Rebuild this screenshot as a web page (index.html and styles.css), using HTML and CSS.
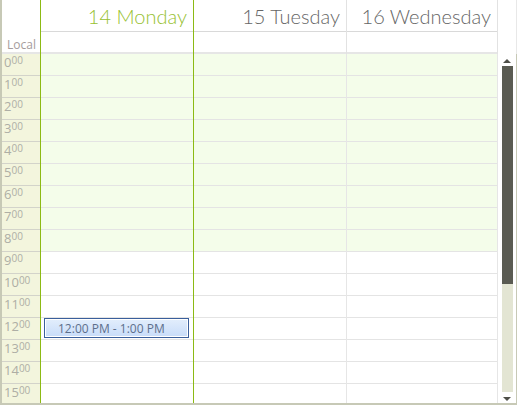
FILE: index.html
```html
<!DOCTYPE html>
<html lang="en">
<head>
    <meta charset="UTF-8">
    <title>Scheduler - Week</title>
    <link rel="stylesheet" href="styles.css">
</head>
<body>

<div class="scheduler">
    <div class="header">
        <div class="gutter-head">
            <div class="head-blank"></div>
            <div class="tz-label">Local</div>
        </div>
        <div class="day-head today">
            <div class="day-name">14 Monday</div>
            <div class="all-day"></div>
        </div>
        <div class="day-head">
            <div class="day-name">15 Tuesday</div>
            <div class="all-day"></div>
        </div>
        <div class="day-head last">
            <div class="day-name">16 Wednesday</div>
            <div class="all-day"></div>
        </div>
        <div class="head-corner"></div>
    </div>

    <div class="body">
        <div class="gutter">
            <div class="hour">0<sup>00</sup></div>
            <div class="hour">1<sup>00</sup></div>
            <div class="hour">2<sup>00</sup></div>
            <div class="hour">3<sup>00</sup></div>
            <div class="hour">4<sup>00</sup></div>
            <div class="hour">5<sup>00</sup></div>
            <div class="hour">6<sup>00</sup></div>
            <div class="hour">7<sup>00</sup></div>
            <div class="hour">8<sup>00</sup></div>
            <div class="hour">9<sup>00</sup></div>
            <div class="hour">10<sup>00</sup></div>
            <div class="hour">11<sup>00</sup></div>
            <div class="hour">12<sup>00</sup></div>
            <div class="hour">13<sup>00</sup></div>
            <div class="hour">14<sup>00</sup></div>
            <div class="hour">15<sup>00</sup></div>
        </div>

        <div class="day today">
            <div class="slot off"></div>
            <div class="slot off"></div>
            <div class="slot off"></div>
            <div class="slot off"></div>
            <div class="slot off"></div>
            <div class="slot off"></div>
            <div class="slot off"></div>
            <div class="slot off"></div>
            <div class="slot off"></div>
            <div class="slot"></div>
            <div class="slot"></div>
            <div class="slot"></div>
            <div class="slot"></div>
            <div class="slot"></div>
            <div class="slot"></div>
            <div class="slot"></div>
            <div class="event">12:00 PM - 1:00 PM</div>
        </div>

        <div class="day">
            <div class="slot off"></div>
            <div class="slot off"></div>
            <div class="slot off"></div>
            <div class="slot off"></div>
            <div class="slot off"></div>
            <div class="slot off"></div>
            <div class="slot off"></div>
            <div class="slot off"></div>
            <div class="slot off"></div>
            <div class="slot"></div>
            <div class="slot"></div>
            <div class="slot"></div>
            <div class="slot"></div>
            <div class="slot"></div>
            <div class="slot"></div>
            <div class="slot"></div>
        </div>

        <div class="day last">
            <div class="slot off"></div>
            <div class="slot off"></div>
            <div class="slot off"></div>
            <div class="slot off"></div>
            <div class="slot off"></div>
            <div class="slot off"></div>
            <div class="slot off"></div>
            <div class="slot off"></div>
            <div class="slot off"></div>
            <div class="slot"></div>
            <div class="slot"></div>
            <div class="slot"></div>
            <div class="slot"></div>
            <div class="slot"></div>
            <div class="slot"></div>
            <div class="slot"></div>
        </div>

        <div class="scrollbar">
            <div class="arrow up"></div>
            <div class="thumb"></div>
            <div class="track"></div>
            <div class="arrow down"></div>
        </div>
    </div>
</div>

</body>
</html>
```

FILE: styles.css
```css
body {
    margin: 0;
    background-color: #ffffff;
    font-family: 'Open Sans', 'Noto Sans', sans-serif;
}
.scheduler {
    width: 515px;
    height: 403px;
    border-left: 2px solid #c7c9b6;
    border-bottom: 2px solid #c7c9b6;
    overflow: hidden;
    display: flex;
    flex-direction: column;
}
.header {
    display: flex;
    height: 54px;
    flex-shrink: 0;
}
.gutter-head {
    width: 38px;
    border-right: 1px solid #8cba14;
    display: flex;
    flex-direction: column;
}
.gutter-head .head-blank {
    height: 32px;
}
.gutter-head .tz-label {
    height: 20px;
    border-bottom: 2px solid #e6e6e6;
    font-size: 12px;
    color: #a59c9c;
    text-align: right;
    padding-right: 4px;
    line-height: 26px;
}
.day-head {
    width: 152px;
    border-right: 1px solid #e2e2e2;
    display: flex;
    flex-direction: column;
}
.day-head.today {
    border-right-color: #8cba14;
}
.day-head.last {
    width: 150px;
}
.day-head .day-name {
    height: 31px;
    border-bottom: 1px solid #d9d9d9;
    text-align: right;
    padding-right: 6px;
    font-family: 'Lato', 'Open Sans', sans-serif;
    font-size: 20px;
    font-weight: 300;
    line-height: 33px;
    color: #666666;
    white-space: nowrap;
}
.day-head.today .day-name {
    color: #97c130;
}
.day-head .all-day {
    height: 20px;
    border-bottom: 2px solid #e6e6e6;
}
.head-corner {
    flex: 1;
    border-right: 1px solid #e8e8e8;
}
.body {
    display: flex;
    flex: 1;
    overflow: hidden;
}
.gutter {
    width: 38px;
    background-color: #f3f5dd;
    border-right: 1px solid #8cba14;
}
.gutter .hour {
    height: 21px;
    border-bottom: 1px solid #d3d3ca;
    font-size: 13px;
    line-height: 17px;
    color: #aeaea5;
    padding-left: 2px;
}
.gutter .hour sup {
    font-size: 10px;
    vertical-align: top;
    line-height: 13px;
}
.day {
    width: 152px;
    border-right: 1px solid #e6e6e6;
    position: relative;
}
.day.today {
    border-right-color: #8cba14;
}
.day.last {
    width: 150px;
}
.slot {
    height: 21px;
    border-bottom: 1px solid #e4e4e4;
}
.slot.off {
    background-color: #f4fdea;
}
.event {
    position: absolute;
    top: 264px;
    left: 3px;
    width: 130px;
    height: 18px;
    border: 1px solid #3a5f9c;
    box-shadow: inset 0 0 0 1px #ffffff;
    background: linear-gradient(#e3eefc, #c8dcf9);
    font-size: 12px;
    line-height: 19px;
    color: #5d6f8c;
    padding-left: 13px;
    white-space: nowrap;
}
.scrollbar {
    flex: 1;
    display: flex;
    flex-direction: column;
    align-items: center;
    padding: 3px 0 2px 0;
    border-right: 1px solid #c7c9b6;
}
.scrollbar .arrow {
    width: 0;
    height: 0;
    border-left: 4px solid transparent;
    border-right: 4px solid transparent;
    margin: 2px 0 3px 0;
}
.scrollbar .arrow.up {
    border-bottom: 4px solid #4e4f48;
}
.scrollbar .arrow.down {
    border-top: 4px solid #4e4f48;
    margin: 5px 0 0 0;
}
.scrollbar .thumb {
    width: 11px;
    height: 218px;
    background-color: #5a5b52;
}
.scrollbar .track {
    width: 11px;
    flex: 1;
    background-color: #e3e5d3;
}
```
